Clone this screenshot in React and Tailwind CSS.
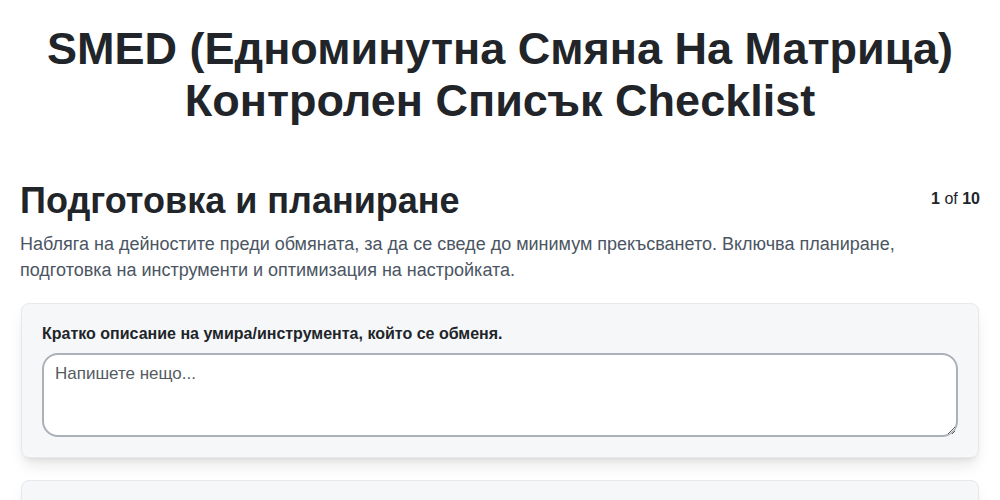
export default function App() {
  return (
    <div className="min-h-screen bg-white px-5 pt-[23px] font-['Liberation_Sans',Arial,sans-serif] text-[#212529]">
      {/* Page title */}
      <h1 className="text-center text-[45px] font-bold leading-[52px]">
        SMED (Едноминутна Смяна На Матрица)
        <br />
        Контролен Списък Checklist
      </h1>

      {/* Section header */}
      <div className="mt-[52px] flex items-start justify-between">
        <h2 className="text-[36px] font-bold leading-[43px]">Подготовка и планиране</h2>
        <div className="pt-[8px] text-[16px] leading-[24px]">
          <span className="font-bold">1</span> of <span className="font-bold">10</span>
        </div>
      </div>
      <p className="mt-[9px] text-[18px] leading-[26px] text-[#4b5563]">
        Набляга на дейностите преди обмяната, за да се сведе до минимум прекъсването. Включва планиране,
        подготовка на инструменти и оптимизация на настройката.
      </p>

      {/* Question cards */}
      <div className="mt-5 flex flex-col gap-[22px] px-px">
        <div className="rounded-lg border border-[#e6e8eb] bg-[#f6f7f9] p-5 shadow-lg">
          <label className="mb-[9px] block text-[16px] font-bold leading-5">
            Кратко описание на умира/инструмента, който се обменя.
          </label>
          <textarea
            placeholder="Напишете нещо..."
            className="block h-[84px] w-full rounded-2xl border-2 border-[#aab1b9] bg-white px-[11px] pt-[7px] text-[17px] leading-6 outline-none placeholder:text-[#555b61]"
          />
        </div>
        <div className="h-[120px] rounded-lg border border-[#e6e8eb] bg-[#f6f7f9] p-5 shadow-lg" />
      </div>
    </div>
  );
}
